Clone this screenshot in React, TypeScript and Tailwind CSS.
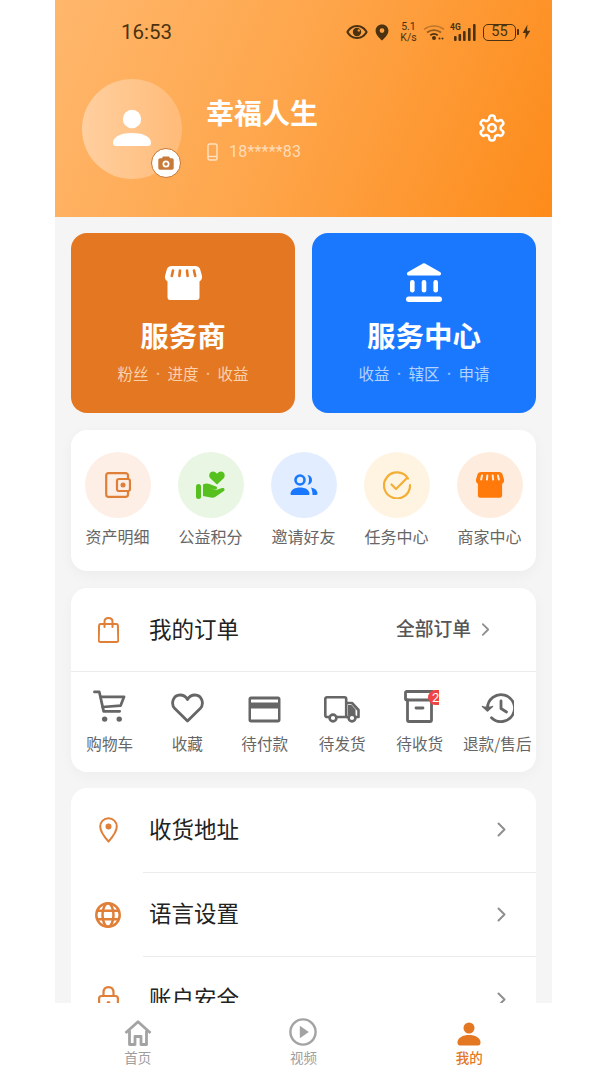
import type { ReactNode } from 'react';

const cjk = "font-['Noto_Sans_CJK_SC','Noto_Sans',sans-serif]";

function StatusBar() {
  return (
    <div className="flex h-[64px] items-center pl-[66px] pr-[21px] text-[#4a3210]">
      <span className="mt-[1px] font-['Roboto',sans-serif] text-[20.500px] leading-none">16:53</span>
      <div className="ml-auto flex items-center">
        <svg width="22" height="16" viewBox="0 0 22 16" fill="currentColor">
          <path fillRule="evenodd" d="M11 1C6 1 2.200 4 .3 8c1.900 4 5.700 7 10.700 7s8.800-3 10.700-7C19.800 4 16 1 11 1zm0 2c3.700 0 6.700 2 8.400 5-1.700 3-4.700 5-8.400 5s-6.700-2-8.400-5C4.300 5 7.300 3 11 3z" />
          <circle cx="11" cy="8" r="4.200" />
          <circle cx="12.800" cy="6.400" r="1.200" fill="#f39c3c" />
        </svg>
        <svg className="ml-[7px]" width="14" height="17" viewBox="0 0 14 17" fill="currentColor">
          <path fillRule="evenodd" d="M7 .5C3.400.5.600 3.200.6 6.700c0 3.700 3.400 7 6.400 9.800 3-2.800 6.400-6.100 6.400-9.800C13.400 3.200 10.600.5 7 .5zm0 8.500a2.400 2.400 0 1 1 0-4.800A2.400 2.400 0 0 1 7 9z" />
        </svg>
        <div className="ml-[11px] flex w-[17px] flex-col items-center font-['Roboto',sans-serif] text-[10.500px] leading-[11px]">
          <span>5.1</span>
          <span>K/s</span>
        </div>
        <svg className="ml-[6px]" width="22" height="16" viewBox="0 0 22 16" fill="none" stroke="currentColor">
          <path d="M1 5.500C6.500.8 15.500.8 21 5.500" strokeWidth="1.500" opacity="0.35" />
          <path d="M4 8.500c4-3.300 10-3.300 14 0" strokeWidth="1.700" opacity="0.6" />
          <path d="M7.300 11.300c2.200-1.600 5.200-1.600 7.400 0" strokeWidth="1.800" />
          <circle cx="11" cy="14" r="2" fill="currentColor" stroke="none" />
          <circle cx="16.500" cy="14.500" r="1" fill="currentColor" stroke="none" />
          <circle cx="19.500" cy="14.500" r="1" fill="currentColor" stroke="none" />
        </svg>
        <div className="relative ml-[5px] h-[17px] w-[26px]">
          <span className="absolute top-[-1px] left-0 font-['Roboto',sans-serif] text-[8.500px] font-bold leading-[9px]">4G</span>
          <svg className="absolute top-0 left-0" width="26" height="17" viewBox="0 0 26 17" fill="currentColor">
            <rect x="4" y="12" width="2.600" height="5" rx="1" />
            <rect x="8.500" y="10" width="2.600" height="7" rx="1" />
            <rect x="13" y="7" width="2.600" height="10" rx="1" />
            <rect x="18" y="4" width="2.600" height="13" rx="1" />
            <rect x="23" y="0" width="2.600" height="17" rx="1" />
          </svg>
        </div>
        <div className="ml-[7px] flex h-[17px] w-[33px] items-center justify-center rounded-[5px] border border-current font-['Roboto',sans-serif] text-[14.500px] leading-none">55</div>
        <div className="ml-[1px] h-[6px] w-[2px] rounded-r-[1px] bg-current" />
        <svg className="ml-[3px]" width="9" height="16" viewBox="0 0 10 16" fill="currentColor">
          <path d="M6 0 .8 9h3.400L3.400 16 9.200 6.500H5.600z" />
        </svg>
      </div>
    </div>
  );
}

function Header() {
  return (
    <div className="h-[217px] shrink-0 bg-[linear-gradient(112deg,#ffb76c_0%,#fea64c_45%,#fd8b1a_100%)]">
      <StatusBar />
      <div className="flex items-start pt-[15px] pl-[27px] pr-[45px]">
        <div className="relative h-[100px] w-[100px] rounded-full bg-gradient-to-r from-[#ffcf9f] to-[#ffbb78]">
          <div className="flex h-full items-center justify-center pb-[1px]">
            <svg width="40" height="40" viewBox="0 0 40 40" fill="#fff">
              <circle cx="20" cy="10" r="9.200" />
              <path d="M1 34c0-7 9-10 19-10s19 3 19 10c0 2-1 3-3 3H4c-2 0-3-1-3-3z" />
            </svg>
          </div>
          <div className="absolute right-[1px] bottom-[1px] flex h-[30px] w-[30px] items-center justify-center rounded-full border-[1.500px] border-[#c8752c] bg-white">
            <svg width="16" height="14" viewBox="0 0 16 14">
              <path fill="#c87a3a" fillRule="evenodd" d="M5 .5 3.800 2.300H2C1 2.300.3 3 .3 4v8c0 1 .7 1.700 1.700 1.700h12c1 0 1.700-.7 1.700-1.700V4c0-1-.7-1.700-1.700-1.700h-1.800L11 .5H5zM8 4.500a3.500 3.500 0 1 1 0 7 3.500 3.500 0 0 1 0-7zm0 1.700a1.800 1.800 0 1 0 0 3.600 1.800 1.800 0 0 0 0-3.600z" />
            </svg>
          </div>
        </div>
        <div className="ml-[24px] pt-[13px]">
          <div className={`${cjk} text-[28px] font-bold leading-[40px] text-white`}>幸福人生</div>
          <div className="mt-[11px] flex items-center pl-[1px]">
            <svg width="11" height="18" viewBox="0 0 11 18" fill="none" stroke="#ffe2c2" strokeWidth="1.400">
              <rect x="1" y="1" width="9" height="16" rx="1.800" />
              <path d="M1 13.500h9" />
            </svg>
            <span className="ml-[11px] font-['Roboto',sans-serif] text-[16px] leading-none tracking-[0.2px] text-[#ffdcb8]">18*****83</span>
          </div>
        </div>
        <svg className="mt-[34px] ml-auto" width="30" height="30" viewBox="0 0 24 24" fill="none" stroke="#fff" strokeWidth="2" strokeLinejoin="round" strokeLinecap="round">
          <path d="M12.220 2h-.440a2 2 0 0 0-2 2v.180a2 2 0 0 1-1 1.730l-.430.250a2 2 0 0 1-2 0l-.150-.080a2 2 0 0 0-2.730.730l-.220.380a2 2 0 0 0 .730 2.730l.150.100a2 2 0 0 1 1 1.720v.510a2 2 0 0 1-1 1.740l-.150.090a2 2 0 0 0-.730 2.730l.220.380a2 2 0 0 0 2.730.730l.150-.080a2 2 0 0 1 2 0l.430.250a2 2 0 0 1 1 1.730V20a2 2 0 0 0 2 2h.440a2 2 0 0 0 2-2v-.180a2 2 0 0 1 1-1.730l.430-.250a2 2 0 0 1 2 0l.150.080a2 2 0 0 0 2.730-.730l.220-.390a2 2 0 0 0-.730-2.730l-.150-.080a2 2 0 0 1-1-1.740v-.500a2 2 0 0 1 1-1.740l.150-.090a2 2 0 0 0 .730-2.730l-.220-.380a2 2 0 0 0-2.730-.730l-.150.080a2 2 0 0 1-2 0l-.430-.250a2 2 0 0 1-1-1.730V4a2 2 0 0 0-2-2z" />
          <circle cx="12" cy="12" r="3" />
        </svg>
      </div>
    </div>
  );
}

function StoreIcon({ color, stripe, size }: { color: string; stripe: string; size: number }) {
  return (
    <svg width={size} height={size * 0.92} viewBox="0 0 37 34">
      <path fill={color} d="M2.500 12h32v19a3 3 0 0 1-3 3h-26a3 3 0 0 1-3-3z" />
      <path fill={color} d="M7 0h23c3 0 4.500 1.500 5.200 3.500L37 10c.6 3-1.500 6-4.500 6-1.800 0-3.300-.8-4.200-2-1 1.200-2.300 2-4.800 2-2 0-3.500-.8-5-2-1.500 1.200-3 2-5 2-2.500 0-3.800-.8-4.800-2-.9 1.200-2.400 2-4.200 2-3 0-5.100-3-4.500-6l1.800-6.500C2.500 1.500 4 0 7 0z" />
      <path stroke={stripe} strokeWidth="2.600" strokeLinecap="round" d="M8 4.500 6.800 10M15 4.500l-.6 5.500M22 4.500l.6 5.500M29 4.500l1.200 5.500" />
    </svg>
  );
}

function BankIcon() {
  return (
    <svg width="36" height="39" viewBox="0 0 36 39" fill="#fff">
      <path d="M17 .5c.6-.4 1.400-.4 2 0l15 8.500c1.800 1 1.200 3.500-.8 3.500H2.800C.8 12.500.2 10 2 9z" />
      <rect x="4" y="17" width="4.600" height="12.500" rx="2.300" />
      <rect x="15.700" y="17" width="4.600" height="12.500" rx="2.300" />
      <rect x="27.400" y="17" width="4.600" height="12.500" rx="2.300" />
      <rect x="0" y="33.500" width="36" height="5.500" rx="2.750" />
    </svg>
  );
}

function ServiceCards() {
  const cards = [
    { title: '服务商', sub: ['粉丝', '进度', '收益'], bg: 'bg-[#e47722]', subColor: 'text-[#f9d2ad]', icon: <div className="mb-[2px]"><StoreIcon color="#fff" stripe="#e47722" size={37} /></div> },
    { title: '服务中心', sub: ['收益', '辖区', '申请'], bg: 'bg-[#1a78ff]', subColor: 'text-[#b3d3ff]', icon: <BankIcon /> },
  ];
  return (
    <div className="grid grid-cols-2 gap-[17px]">
      {cards.map((c) => (
        <div key={c.title} className={`flex h-[180px] flex-col items-center rounded-[16px] ${c.bg}`}>
          <div className="flex h-[69px] items-end justify-center">{c.icon}</div>
          <div className={`${cjk} mt-[13px] text-[28.500px] font-bold leading-[40px] text-white`}>{c.title}</div>
          <div className={`${cjk} mt-[6px] flex items-center text-[15.500px] leading-[24px] ${c.subColor}`}>
            <span>{c.sub[0]}</span>
            <span className="w-[19px] text-center text-[11px] opacity-80">·</span>
            <span>{c.sub[1]}</span>
            <span className="w-[19px] text-center text-[11px] opacity-80">·</span>
            <span>{c.sub[2]}</span>
          </div>
        </div>
      ))}
    </div>
  );
}

const shortcuts: { label: string; bg: string; icon: ReactNode }[] = [
  {
    label: '资产明细',
    bg: 'bg-[#fdeee6]',
    icon: (
      <svg width="26" height="26" viewBox="0 0 26 26" fill="none" stroke="#e07f38" strokeWidth="2.200" strokeLinejoin="round">
        <path d="M23 7V3.500C23 2 22 1.200 20.500 1.200H3.500C2 1.200 1.200 2 1.200 3.500v19c0 1.500.8 2.300 2.300 2.300h17c1.500 0 2.500-.8 2.500-2.300V19" />
        <rect x="12" y="7" width="13" height="12" rx="2" />
        <circle cx="18" cy="13" r="1.400" fill="#e07f38" />
      </svg>
    ),
  },
  {
    label: '公益积分',
    bg: 'bg-[#e9f6e3]',
    icon: (
      <svg width="30" height="29" viewBox="0 0 30 29" fill="#55c01e">
        <path d="M21 13.500 14.500 7.500C12 5 13.500.5 17 .5c1.800 0 3.200 1 4 2.300C21.800 1.500 23.200.5 25 .5c3.500 0 5 4.500 2.500 7z" />
        <rect x="0" y="13" width="5" height="15" rx="2.500" />
        <path d="M7 13.500c3-1.500 6-1 9 .5l4 1.500c2 .8 1 3.500-1 3l-5-1 6 1.500 6-2c2.500-.5 3.500 2 1.500 3.300l-8 5.500c-2 1.200-4 1.200-6 .5L7 25z" />
      </svg>
    ),
  },
  {
    label: '邀请好友',
    bg: 'bg-[#e2eeff]',
    icon: (
      <svg width="28" height="22" viewBox="0 0 28 22" fill="none">
        <circle cx="10" cy="6" r="4.500" stroke="#1a78ff" strokeWidth="2.600" />
        <path d="M17.500 1c3 .3 4.500 2.500 4.500 5s-1.500 4.500-4.500 5c1-1.500 1.500-3 1.500-5s-.5-3.500-1.500-5z" fill="#1a78ff" />
        <path d="M.5 19.500C1 15.500 5 13.500 10 13.500s9 2 9.500 6c.1 1-.5 1.500-1.500 1.500H2c-1 0-1.600-.5-1.500-1.500z" fill="#1a78ff" />
        <path d="M21 13.500c3.500.5 6 2.500 6.500 5.500.2 1.200-.5 2-1.500 2h-3.500c0-2.800-.5-5-1.500-7.500z" fill="#1a78ff" />
      </svg>
    ),
  },
  {
    label: '任务中心',
    bg: 'bg-[#fff4e2]',
    icon: (
      <svg width="28" height="28" viewBox="0 0 28 28" fill="none" stroke="#f2ae35" strokeWidth="2.200" strokeLinecap="round" strokeLinejoin="round">
        <path d="M25 7.500A13 13 0 1 0 27 14" />
        <path d="M8.500 13.500 13 18 24 7" />
      </svg>
    ),
  },
  {
    label: '商家中心',
    bg: 'bg-[#feeddf]',
    icon: <StoreIcon color="#ff7a0a" stripe="#feeddf" size={28} />,
  },
];

function Shortcuts() {
  return (
    <div className="mt-[17px] grid h-[141px] grid-cols-5 rounded-[16px] bg-white shadow-[0_4px_14px_rgba(0,0,0,0.04)]">
      {shortcuts.map((s) => (
        <div key={s.label} className="flex flex-col items-center pt-[22px]">
          <div className={`flex h-[66px] w-[66px] items-center justify-center rounded-full ${s.bg}`}>{s.icon}</div>
          <span className={`${cjk} mt-[6px] text-[16px] leading-[24px] text-[#666]`}>{s.label}</span>
        </div>
      ))}
    </div>
  );
}

const G = '#666';

const orderItems: { label: string; icon: ReactNode }[] = [
  {
    label: '购物车',
    icon: (
      <svg width="33" height="33" viewBox="0 0 34 33" fill="none" stroke={G} strokeWidth="2.800" strokeLinejoin="round" strokeLinecap="round">
        <path d="M1.500 1.500h5l4.500 20h16.500" />
        <path d="M8 6.500h24L28.500 15.500 10 17" />
        <circle cx="12" cy="29.500" r="2.800" fill={G} stroke="none" />
        <circle cx="27" cy="29.500" r="2.800" fill={G} stroke="none" />
      </svg>
    ),
  },
  {
    label: '收藏',
    icon: (
      <svg width="33" height="30" viewBox="0 0 33 30" fill="none" stroke={G} strokeWidth="2.800" strokeLinejoin="round">
        <path d="M16.500 28 3.800 15.500C-.5 11 2 2 9 2c3.500 0 6 1.700 7.500 4.500C18 3.700 20.500 2 24 2c7 0 9.500 9 5.200 13.500z" />
      </svg>
    ),
  },
  {
    label: '待付款',
    icon: (
      <svg width="33" height="27" viewBox="0 0 33 27" fill={G}>
        <path fillRule="evenodd" d="M3 .5h27c1.500 0 2.500 1 2.500 2.500v21c0 1.500-1 2.500-2.500 2.500H3c-1.500 0-2.500-1-2.500-2.500V3C.5 1.500 1.500.5 3 .5zm0 3v3h27v-3zm0 9v11h27v-11z" />
      </svg>
    ),
  },
  {
    label: '待发货',
    icon: (
      <svg width="36" height="27" viewBox="0 0 36 27" fill="none" stroke={G} strokeWidth="2.600" strokeLinejoin="round">
        <path d="M6 21H3c-1 0-1.700-.7-1.700-1.700V3C1.300 2 2 1.300 3 1.300h17.500c1 0 1.700.7 1.700 1.700v18H12" />
        <path d="M22 7h6l6.500 7v7H31" />
        <path d="M22 21h3" />
        <path d="M24 9h3.500l4 4.500V19H24z" fill={G} stroke="none" />
        <circle cx="9" cy="22" r="3.400" />
        <circle cx="28" cy="22" r="3.400" />
      </svg>
    ),
  },
  {
    label: '待收货',
    icon: (
      <svg width="31" height="33" viewBox="0 0 31 33" fill="none" stroke={G} strokeWidth="2.800" strokeLinejoin="round" strokeLinecap="round">
        <rect x="1.500" y="1.500" width="28" height="8.500" rx="1.500" />
        <path d="M3.500 10v20c0 1 .5 1.500 1.500 1.500h21c1 0 1.500-.5 1.500-1.500V10" />
        <path d="M12 18h7" />
      </svg>
    ),
  },
  {
    label: '退款/售后',
    icon: (
      <svg width="33" height="30" viewBox="0 0 33 30" fill="none" stroke={G} strokeWidth="2.800" strokeLinecap="round" strokeLinejoin="round">
        <path d="M6.500 15a13.500 13.500 0 1 1 4 9.700" />
        <path d="M1.500 13.500 6.500 18l5-4.500" fill={G} strokeWidth="1.500" />
        <path d="M20 8v7.500l5.500 3.500" />
      </svg>
    ),
  },
];

function Chevron({ className }: { className: string }) {
  return (
    <svg className={className} width="9" height="15" viewBox="0 0 9 15" fill="none" stroke="#8f8f8f" strokeWidth="2" strokeLinecap="round" strokeLinejoin="round">
      <path d="M1.500 1.500 7.500 7.500l-6 6" />
    </svg>
  );
}

function Orders() {
  return (
    <div className="mt-[17px] h-[184px] rounded-[16px] bg-white shadow-[0_4px_14px_rgba(0,0,0,0.03)]">
      <div className="flex h-[84px] items-center border-b border-[#ececec] pl-[27px] pr-[46px]">
        <svg width="21" height="26" viewBox="0 0 21 26" fill="none" stroke="#e07f38" strokeWidth="2" strokeLinejoin="round" strokeLinecap="round">
          <path d="M2.500 7h16c.8 0 1.300.5 1.400 1.300l.4 15c0 1-.5 1.700-1.500 1.700H2.200c-1 0-1.500-.7-1.500-1.700l.4-15C1.200 7.500 1.700 7 2.500 7z" />
          <path d="M6.500 10V4.500C6.500 2.500 8 1 10.500 1s4 1.500 4 3.500V10" />
        </svg>
        <span className={`${cjk} ml-[30px] mb-[4px] text-[22.500px] leading-[32px] text-[#222]`}>我的订单</span>
        <span className={`${cjk} ml-auto mb-[3px] text-[18.750px] font-medium leading-[28px] text-[#555]`}>全部订单</span>
        <Chevron className="ml-[10px] scale-90" />
      </div>
      <div className="grid grid-cols-6">
        {orderItems.map((o) => (
          <div key={o.label} className="flex flex-col items-center">
            <div className="relative flex h-[52px] w-full items-end justify-center pb-[1px]">
              {o.icon}
              {o.label === '待收货' && (
                <span className="absolute top-[18px] left-[47px] flex h-[15px] w-[11px] items-center overflow-hidden rounded-l-full bg-[#ef4444] pl-[4px] font-['Roboto',sans-serif] text-[13px] leading-none text-white">2</span>
              )}
            </div>
            <span className={`${cjk} mt-[7px] whitespace-nowrap text-[15.600px] leading-[24px] text-[#666]`}>{o.label}</span>
          </div>
        ))}
      </div>
    </div>
  );
}

const settings: { label: string; icon: ReactNode }[] = [
  {
    label: '收货地址',
    icon: (
      <svg width="19" height="26" viewBox="0 0 19 26" fill="none" stroke="#e07f38" strokeWidth="2">
        <path d="M9.500 24.500C5 19.500 1.200 14.500 1.200 9.500a8.300 8.300 0 0 1 16.600 0c0 5-3.800 10-8.300 15z" strokeLinejoin="round" />
        <circle cx="9.500" cy="9.500" r="3" fill="#e07f38" stroke="none" />
      </svg>
    ),
  },
  {
    label: '语言设置',
    icon: (
      <svg width="26" height="26" viewBox="0 0 26 26" fill="none" stroke="#e07f38" strokeWidth="2.500">
        <circle cx="13" cy="13" r="11.700" />
        <ellipse cx="13" cy="13" rx="5.500" ry="11.700" />
        <path d="M2.500 8.800h21M2.500 17.200h21" />
      </svg>
    ),
  },
  {
    label: '账户安全',
    icon: (
      <svg width="21" height="26" viewBox="0 0 21 26" fill="none" stroke="#e07f38" strokeWidth="2.200">
        <rect x="1.100" y="10" width="18.800" height="15" rx="2.500" />
        <path d="M5.500 10V6.500C5.500 3 7.500 1.100 10.500 1.100s5 1.900 5 5.400V10" />
        <circle cx="10.500" cy="17" r="2" fill="#e07f38" stroke="none" />
      </svg>
    ),
  },
];

function SettingsList() {
  return (
    <div className="mt-[16px] rounded-[16px] bg-white">
      {settings.map((s, i) => (
        <div key={s.label} className="flex h-[84.500px] items-stretch">
          <div className="flex w-[72px] shrink-0 items-center justify-center pl-[2px]">{s.icon}</div>
          <div className={`flex flex-1 items-center pr-[30px] ${i < settings.length - 1 ? 'border-b border-[#ececec]' : ''}`}>
            <span className={`${cjk} ml-[6px] mb-[4px] text-[22.500px] leading-[32px] text-[#222]`}>{s.label}</span>
            <Chevron className="ml-auto" />
          </div>
        </div>
      ))}
    </div>
  );
}

const tabs: { label: string; active?: boolean; icon: ReactNode }[] = [
  {
    label: '首页',
    icon: (
      <svg width="28" height="26" viewBox="0 0 28 26" fill="none" stroke="#a3a3a3" strokeWidth="2.800" strokeLinejoin="round">
        <path d="M1.500 13 14 1.800 26.500 13" />
        <path d="M5.500 10.500V24.500h5.500v-8h6v8h5.500V10.500" />
      </svg>
    ),
  },
  {
    label: '视频',
    icon: (
      <svg width="28" height="28" viewBox="0 0 28 28" fill="none">
        <circle cx="14" cy="14" r="12.600" stroke="#a3a3a3" strokeWidth="2.400" />
        <path d="M10.800 7.800 19.800 14l-9 6.200z" fill="#a3a3a3" />
      </svg>
    ),
  },
  {
    label: '我的',
    active: true,
    icon: (
      <svg width="24" height="24" viewBox="0 0 24 24" fill="#e47722">
        <circle cx="12" cy="6" r="5.500" />
        <path d="M.5 20.500c0-5 5.500-7.500 11.500-7.500s11.500 2.500 11.500 7.500c0 2-.8 3-2.500 3H3c-1.700 0-2.500-1-2.500-3z" />
      </svg>
    ),
  },
];

function TabBar() {
  return (
    <div className="grid h-[77px] shrink-0 grid-cols-3 bg-white">
      {tabs.map((t) => (
        <div key={t.label} className="flex flex-col items-center">
          <div className="flex h-[43px] items-end justify-center">{t.icon}</div>
          <span className={`${cjk} mt-[1px] text-[13.500px] leading-[20px] ${t.active ? 'font-medium text-[#e47722]' : 'text-[#9e9e9e]'}`}>{t.label}</span>
        </div>
      ))}
    </div>
  );
}

export default function App() {
  return (
    <div className="flex h-[1080px] w-[607px] justify-start overflow-hidden bg-white">
      <div className="ml-[55px] flex h-full w-[497px] flex-col bg-[#f5f5f5]">
        <div className="min-h-0 flex-1 overflow-hidden">
          <Header />
          <div className="px-[16px] pt-[16px]">
            <ServiceCards />
            <Shortcuts />
            <Orders />
            <SettingsList />
          </div>
        </div>
        <TabBar />
      </div>
    </div>
  );
}
